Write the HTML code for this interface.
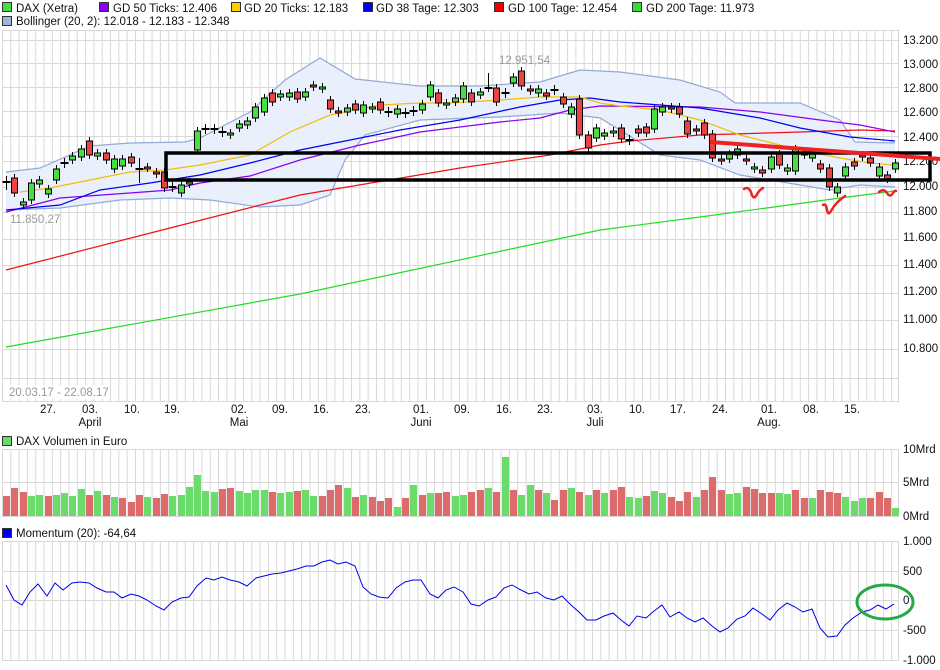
<!DOCTYPE html>
<html><head><meta charset="utf-8">
<style>
html,body{margin:0;padding:0;background:#fff;}
body{width:940px;height:670px;overflow:hidden;position:relative;font-family:"Liberation Sans",sans-serif;}
svg{position:absolute;left:0;top:0;}
text{font-family:"Liberation Sans",sans-serif;font-size:11.5px;fill:#111;}
</style></head><body>
<svg id="s" width="940" height="670" xmlns="http://www.w3.org/2000/svg">
<g id="grid"></g>
<g id="bands"></g>
<g id="lines"></g>
<g id="candles"></g>
<g id="vol"></g>
<g id="mom"></g>
<rect x="2.5" y="2.5" width="9" height="9" fill="#44dd44" stroke="#333"/>
<text x="16" y="12">DAX (Xetra)</text>
<rect x="99.5" y="2.5" width="9" height="9" fill="#8800ee" stroke="#333"/>
<text x="113" y="12">GD 50 Ticks: 12.406</text>
<rect x="231.5" y="2.5" width="9" height="9" fill="#ffcc00" stroke="#333"/>
<text x="244" y="12">GD 20 Ticks: 12.183</text>
<rect x="363.5" y="2.5" width="9" height="9" fill="#0000ee" stroke="#333"/>
<text x="376" y="12">GD 38 Tage: 12.303</text>
<rect x="494.5" y="2.5" width="9" height="9" fill="#ee0000" stroke="#333"/>
<text x="508" y="12">GD 100 Tage: 12.454</text>
<rect x="632.5" y="2.5" width="9" height="9" fill="#33dd33" stroke="#333"/>
<text x="646" y="12">GD 200 Tage: 11.973</text>
<rect x="2.5" y="16.5" width="9" height="9" fill="#9fb4dd" stroke="#333"/>
<text x="16" y="25">Bollinger (20, 2): 12.018 - 12.183 - 12.348</text>
<g>
<text x="903" y="44">13.200</text>
<text x="903" y="68">13.000</text>
<text x="903" y="92">12.800</text>
<text x="903" y="116">12.600</text>
<text x="903" y="141">12.400</text>
<text x="903" y="165">12.200</text>
<text x="903" y="190">12.000</text>
<text x="903" y="215">11.800</text>
<text x="903" y="241">11.600</text>
<text x="903" y="268">11.400</text>
<text x="903" y="295">11.200</text>
<text x="903" y="323">11.000</text>
<text x="903" y="352">10.800</text>
</g>
<rect x="7" y="385" width="98" height="14" fill="#fff"/>
<text x="9" y="396" style="fill:#9a9a9a">20.03.17 - 22.08.17</text>
<rect x="9" y="212" width="50" height="13" fill="#fff" opacity="0.7"/>
<text x="10" y="223" style="fill:#9a9a9a">11.850,27</text>
<text x="499" y="64" style="fill:#9a9a9a">12.951,54</text>
<g text-anchor="middle">
<text x="48" y="413" text-anchor="middle">27.</text>
<text x="90" y="413" text-anchor="middle">03.</text>
<text x="132" y="413" text-anchor="middle">10.</text>
<text x="172" y="413" text-anchor="middle">19.</text>
<text x="239" y="413" text-anchor="middle">02.</text>
<text x="280" y="413" text-anchor="middle">09.</text>
<text x="321" y="413" text-anchor="middle">16.</text>
<text x="363" y="413" text-anchor="middle">23.</text>
<text x="421" y="413" text-anchor="middle">01.</text>
<text x="462" y="413" text-anchor="middle">09.</text>
<text x="504" y="413" text-anchor="middle">16.</text>
<text x="545" y="413" text-anchor="middle">23.</text>
<text x="595" y="413" text-anchor="middle">03.</text>
<text x="637" y="413" text-anchor="middle">10.</text>
<text x="678" y="413" text-anchor="middle">17.</text>
<text x="720" y="413" text-anchor="middle">24.</text>
<text x="769" y="413" text-anchor="middle">01.</text>
<text x="811" y="413" text-anchor="middle">08.</text>
<text x="852" y="413" text-anchor="middle">15.</text>
<text x="90" y="426" text-anchor="middle">April</text>
<text x="239" y="426" text-anchor="middle">Mai</text>
<text x="421" y="426" text-anchor="middle">Juni</text>
<text x="595" y="426" text-anchor="middle">Juli</text>
<text x="769" y="426" text-anchor="middle">Aug.</text>
</g>
<rect x="2.5" y="436.5" width="9" height="9" fill="#66dd66" stroke="#333"/>
<text x="16" y="445">DAX Volumen in Euro</text>
<text x="903" y="453">10Mrd</text>
<text x="903" y="486">5Mrd</text>
<text x="903" y="520">0Mrd</text>
<rect x="2.5" y="528.5" width="9" height="9" fill="#0000ee" stroke="#333"/>
<text x="16" y="537">Momentum (20): -64,64</text>
<text x="903" y="545">1.000</text>
<text x="903" y="575">500</text>
<text x="903" y="604">0</text>
<text x="903" y="634">-500</text>
<text x="903" y="664">-1.000</text>
<g id="over"></g>
</svg>
<script>
var NS="http://www.w3.org/2000/svg";
function el(p,t,a){var e=document.createElementNS(NS,t);for(var k in a)e.setAttribute(k,a[k]);p.appendChild(e);return e;}
var G=document.getElementById('grid'),B=document.getElementById('bands'),L=document.getElementById('lines'),C=document.getElementById('candles'),V=document.getElementById('vol'),M=document.getElementById('mom'),O=document.getElementById('over');
var gc="#d8d8d8";
function vgrid(y1,y2){for(var k=0;;k++){var x=2.5+8.31*k;if(x>898)break;el(G,'line',{x1:x,x2:x,y1:y1,y2:y2,stroke:gc});}el(G,'line',{x1:898.5,x2:898.5,y1:y1,y2:y2,stroke:gc});}
vgrid(30.5,401.5);vgrid(449.5,516.5);vgrid(541.5,660.5);
function py(p){return 186.5+1540*Math.log(12000/p);}
el(G,'line',{x1:2,x2:899,y1:30.5,y2:30.5,stroke:gc});
for(var p=13200;p>=10600;p-=200){var y=Math.round(py(p))+0.5;el(G,'line',{x1:2,x2:899,y1:y,y2:y,stroke:gc});}
el(G,'line',{x1:2,x2:899,y1:401.5,y2:401.5,stroke:gc});
[449.5,482.5,516.5].forEach(function(y){el(G,'line',{x1:2,x2:899,y1:y,y2:y,stroke:gc});});
[541.5,571.5,600.5,630.5,660.5].forEach(function(y){el(G,'line',{x1:2,x2:899,y1:y,y2:y,stroke:gc});});
function pts(a){return a.map(function(q){return q[0]+','+q[1];}).join(' ');}
var up=[[6,172],[40,168],[90,146],[130,143],[185,142],[200,138],[250,112],[285,80],[320,58],[355,79],[420,86],[480,86],[540,82],[580,70],[620,72],[680,80],[720,92],[735,103],[800,103],[840,120],[855,142],[895,143]];
var lo=[[6,210],[60,208],[120,200],[170,198],[210,200],[260,207],[300,205],[330,195],[345,160],[365,135],[420,120],[500,117],[560,113],[600,118],[620,130],[660,155],[700,160],[740,175],[800,185],[830,190],[860,185],[895,187]];
el(B,'polygon',{points:pts(up.concat(lo.slice().reverse())),fill:"#e9effb"});
el(B,'polyline',{points:pts(up),fill:"none",stroke:"#92aad8","stroke-width":1.2});
el(B,'polyline',{points:pts(lo),fill:"none",stroke:"#92aad8","stroke-width":1.2});
var g200=[[6,347],[300,294],[600,230],[700,217],[840,198],[895,191]];
var g100=[[6,270],[170,228],[300,195],[460,168],[550,155],[600,145],[630,141],[700,135],[800,132],[860,130],[895,131]];
var g50=[[6,212],[60,198],[130,193],[170,190],[200,183],[250,176],[300,160],[360,145],[420,132],[500,122],[540,118],[570,110],[600,106],[700,107],[760,112],[820,120],[860,125],[895,132]];
var g38=[[6,210],[60,205],[100,190],[150,183],[200,175],[250,163],[300,150],[400,130],[460,120],[520,107],[560,100],[590,98],[620,102],[700,108],[760,118],[800,128],[850,137],[895,141]];
var g20=[[20,192],[50,188],[100,178],[130,172],[165,170],[200,165],[250,155],[290,132],[330,115],[380,105],[420,103],[450,103],[500,100],[540,97],[580,97],[600,103],[620,106],[660,110],[700,120],[740,135],[800,150],[840,158],[870,163],[892,165]];
[[g200,"#22dd22"],[g100,"#ee1111"],[g50,"#8800ee"],[g38,"#0000ee"],[g20,"#f0c000"]].forEach(function(a){el(L,'polyline',{points:pts(a[0]),fill:"none",stroke:a[1],"stroke-width":1.2});});
var c=[[180,184,'d'],[178,193,'r'],[202,205,'g'],[183,200,'g'],[180,184,'g'],[189,194,'g'],[169,180,'g'],[162,164,'d'],[156,160,'g'],[149,157,'g'],[141,155,'r'],[153,156,'g'],[153,160,'r'],[159,169,'g'],[159,166,'g'],[157,163,'r'],[168,170,'d'],[167,168,'r'],[172,174,'r'],[172,188,'r'],[186,188,'d'],[185,193,'g'],[182,184,'g'],[131,150,'g'],[128,130,'d'],[128,130,'d'],[131,133,'d'],[133,135,'g'],[124,128,'g'],[121,125,'g'],[107,118,'g'],[98,112,'g'],[93,102,'r'],[94,97,'g'],[93,97,'g'],[92,99,'r'],[92,97,'g'],[85,87,'r'],[87,89,'g'],[100,109,'r'],[111,113,'r'],[108,112,'g'],[104,110,'r'],[105,113,'g'],[107,109,'g'],[102,110,'r'],[111,113,'d'],[109,114,'g'],[112,114,'d'],[110,112,'d'],[104,110,'g'],[85,97,'g'],[93,103,'r'],[103,105,'g'],[98,102,'g'],[86,99,'g'],[93,102,'r'],[92,95,'g'],[87,89,'d'],[88,102,'r'],[92,94,'d'],[77,83,'g'],[71,86,'r'],[89,91,'r'],[89,93,'g'],[93,96,'r'],[89,91,'d'],[97,104,'r'],[107,114,'g'],[99,135,'r'],[135,148,'r'],[128,138,'g'],[133,136,'g'],[131,133,'g'],[128,139,'r'],[139,141,'d'],[129,133,'r'],[127,133,'r'],[109,129,'g'],[107,112,'g'],[107,109,'r'],[107,114,'r'],[121,134,'r'],[129,131,'r'],[123,135,'r'],[134,158,'r'],[159,161,'r'],[154,159,'g'],[149,155,'g'],[159,161,'r'],[167,169,'g'],[170,173,'r'],[157,169,'g'],[154,165,'r'],[168,171,'g'],[149,171,'g'],[152,155,'r'],[152,158,'g'],[164,169,'r'],[168,187,'r'],[187,193,'g'],[167,176,'g'],[162,166,'r'],[155,157,'r'],[158,163,'r'],[167,176,'g'],[175,179,'r'],[163,169,'g']];
var wk={16:[158,183],58:[73,92],0:[176,190]};
c.forEach(function(d,i){var x=Math.round(6+8.31*i)+0.5;var t=d[0],b=d[1];var w=wk[i]||[t-4,b+4];
el(C,'line',{x1:x,x2:x,y1:w[0],y2:w[1],stroke:"#000"});
if(d[2]=='d'){el(C,'line',{x1:x-4,x2:x+4,y1:(t+b)/2,y2:(t+b)/2,stroke:"#000","stroke-width":2});}
else el(C,'rect',{x:x-3,y:t,width:6,height:Math.max(b-t,2),fill:d[2]=='g'?"#44e044":"#e84444",stroke:"#000"});});
var v=[496,488,492,496,495,496,495,493,496,489,495,491,495,497,498,502,495,497,498,494,496,495,487,475,491,492,489,488,491,493,490,490,492,493,492,491,490,496,496,490,485,488,497,495,497,501,498,507,498,485,495,493,493,492,496,495,492,490,488,492,457,490,495,485,490,493,500,490,488,492,495,490,493,490,487,497,498,496,491,493,497,501,492,497,490,477,490,494,493,487,489,493,493,493,494,490,498,498,490,492,493,497,501,498,498,492,498,508];
var vc="rrrggrggggrgrgrrrgrrggggggrrggggrggrggrrrgrgrrrgrgrgrrggr"+"rgrgrggrgrrgrgrgr"+"rggrggrrrgrrrggrrrrggrrgrrrgggrrrg";
v.forEach(function(t,i){var x=Math.round(6+8.31*i);var col=vc.charAt(i)=='r'?"#dd6b6b":"#6bdb6b";el(V,'rect',{x:x-3,y:t,width:7,height:516-t,fill:col});});
var m=[[6,585],[14,600],[22,605],[30,592],[38,584],[47,596],[55,583],[63,590],[72,583],[80,582],[89,583],[97,588],[106,592],[114,592],[122,598],[131,594],[139,596],[147,600],[156,606],[164,610],[172,602],[181,598],[189,597],[197,586],[206,578],[214,580],[222,577],[230,580],[239,582],[247,586],[256,578],[264,576],[272,574],[281,573],[289,571],[297,569],[306,566],[314,566],[322,562],[330,560],[338,564],[346,562],[355,566],[363,587],[371,594],[379,597],[388,598],[396,588],[405,582],[413,580],[421,580],[430,594],[438,598],[446,590],[454,587],[463,592],[471,604],[479,606],[488,600],[496,597],[504,588],[512,585],[521,590],[529,594],[537,592],[546,598],[554,600],[562,596],[571,605],[579,612],[587,620],[596,620],[604,616],[613,613],[621,620],[629,626],[637,616],[646,618],[654,611],[662,605],[670,617],[679,612],[687,618],[695,622],[703,618],[712,626],[720,632],[728,628],[737,619],[745,616],[753,608],[762,614],[770,620],[778,610],[787,603],[795,607],[803,612],[812,609],[820,628],[828,637],[837,636],[845,625],[853,618],[862,612],[870,610],[878,605],[886,609],[894,604]];
el(M,'polyline',{points:pts(m),fill:"none",stroke:"#0000ee","stroke-width":1});
el(O,'rect',{x:166,y:153,width:764,height:27,fill:"none",stroke:"#000","stroke-width":3.5});
el(O,'line',{x1:710,y1:142,x2:940,y2:159,stroke:"#ee2222","stroke-width":4});
el(O,'path',{d:"M744 189 Q748 186 751 192 Q753 200 756 196 Q759 190 763 188",fill:"none",stroke:"#ee2222","stroke-width":2.5,"stroke-linecap":"round"});
el(O,'path',{d:"M823 205 Q826 203 827 210 Q828 216 831 211 Q836 202 845 196",fill:"none",stroke:"#ee2222","stroke-width":2.5,"stroke-linecap":"round"});
el(O,'path',{d:"M879 192 Q884 188 887 193 Q890 198 893 193 Q895 190 896 191",fill:"none",stroke:"#ee2222","stroke-width":2.5,"stroke-linecap":"round"});
el(O,'ellipse',{cx:885,cy:602,rx:28,ry:17,fill:"none",stroke:"#22aa44","stroke-width":3});
</script>
</body></html>
